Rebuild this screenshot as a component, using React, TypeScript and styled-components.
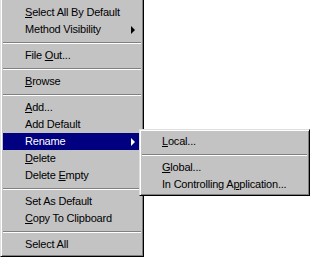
import React from "react";
import styled, { createGlobalStyle } from "styled-components";

const GlobalStyle = createGlobalStyle`
  html, body {
    margin: 0;
    padding: 0;
    background: #ffffff;
    overflow: hidden;
  }
`;

const Screen = styled.div`
  position: relative;
  width: 312px;
  height: 257px;
  overflow: hidden;
  background: #ffffff;
  font-family: "Liberation Sans", Arial, sans-serif;
  font-size: 11px;
  letter-spacing: -0.2px;
  color: #000000;
`;

const Menu = styled.div<{ $width: number }>`
  box-sizing: border-box;
  width: ${(p) => p.$width}px;
  background: #c3c3c3;
  border: 1px solid;
  border-color: #dfdfdf #000000 #000000 #dfdfdf;
  box-shadow: inset 1px 1px 0 #ffffff, inset -1px -1px 0 #808080;
  padding: 3px 2px 3px 2px;
`;

const MainMenu = styled(Menu)`
  margin-top: -2px;
  padding-top: 5px;
`;

const SubMenu = styled(Menu)`
  position: absolute;
  left: 139px;
  top: 129px;
  padding-bottom: 2px;
`;

const Row = styled.div<{ $active?: boolean; $indent: number }>`
  display: flex;
  align-items: center;
  justify-content: space-between;
  height: 17px;
  line-height: 17px;
  padding: 0 6px 0 ${(p) => p.$indent}px;
  white-space: nowrap;
  background: ${(p) => (p.$active ? "#000080" : "transparent")};
  color: ${(p) => (p.$active ? "#ffffff" : "#000000")};
`;

const Arrow = styled.span<{ $active?: boolean }>`
  width: 0;
  height: 0;
  border-top: 4px solid transparent;
  border-bottom: 4px solid transparent;
  border-left: 4px solid ${(p) => (p.$active ? "#ffffff" : "#000000")};
`;

const Separator = styled.div`
  height: 2px;
  margin: 4px 0 3px;
  border-top: 1px solid #808080;
  border-bottom: 1px solid #ffffff;
  box-sizing: border-box;
`;

const Key = styled.span`
  text-decoration: underline;
`;

type Item =
  | { sep: true }
  | { label: string; key?: number; sub?: boolean; active?: boolean };

const mainItems: Item[] = [
  { label: "Select All By Default", key: 0 },
  { label: "Method Visibility", sub: true },
  { sep: true },
  { label: "File Out...", key: 5 },
  { sep: true },
  { label: "Browse", key: 0 },
  { sep: true },
  { label: "Add...", key: 0 },
  { label: "Add Default" },
  { label: "Rename", sub: true, active: true },
  { label: "Delete", key: 0 },
  { label: "Delete Empty", key: 7 },
  { sep: true },
  { label: "Set As Default" },
  { label: "Copy To Clipboard", key: 0 },
  { sep: true },
  { label: "Select All" },
];

const subItems: Item[] = [
  { label: "Local...", key: 0 },
  { sep: true },
  { label: "Global...", key: 0 },
  { label: "In Controlling Application...", key: 16 },
];

function Label({ text, at }: { text: string; at?: number }) {
  if (at === undefined) return <span>{text}</span>;
  return (
    <span>
      {text.slice(0, at)}
      <Key>{text[at]}</Key>
      {text.slice(at + 1)}
    </span>
  );
}

function MenuItems({ items, indent }: { items: Item[]; indent: number }) {
  return (
    <>
      {items.map((it, i) =>
        "sep" in it ? (
          <Separator key={i} />
        ) : (
          <Row key={i} $active={it.active} $indent={indent}>
            <Label text={it.label} at={it.key} />
            {it.sub && <Arrow $active={it.active} />}
          </Row>
        )
      )}
    </>
  );
}

export default function App() {
  return (
    <Screen>
      <GlobalStyle />
      <MainMenu $width={144}>
        <MenuItems items={mainItems} indent={22} />
      </MainMenu>
      <SubMenu $width={171}>
        <MenuItems items={subItems} indent={20} />
      </SubMenu>
    </Screen>
  );
}
